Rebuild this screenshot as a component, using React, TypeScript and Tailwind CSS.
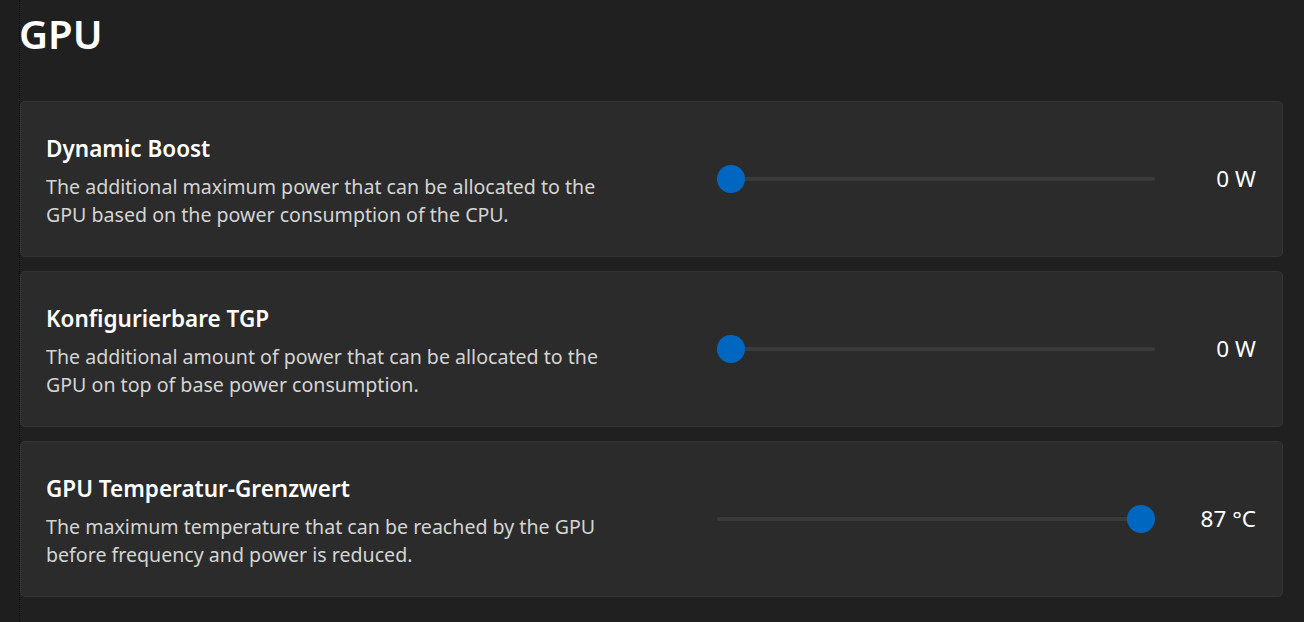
import React from "react";

interface SettingCardProps {
  title: string;
  lines: string[];
  percent: number;
  value: string;
}

const SettingCard = ({ title, lines, percent, value }: SettingCardProps) => {
  return (
    <div className="h-[156px] w-full rounded-[5px] border border-[#353535] bg-[#2b2b2b] flex items-center pl-[25px] pr-[26px]">
      <div className="flex-1 flex flex-col pt-[6px]">
        <h2 className="text-[22.5px] font-semibold text-white leading-[28px]">{title}</h2>
        <p className="mt-[10px] text-[19.6px] text-[#d4d4d4] leading-[28px]">
          {lines.map((l, i) => (
            <span key={i} className="block whitespace-nowrap">
              {l}
            </span>
          ))}
        </p>
      </div>
      <div className="relative w-[438px] h-[28px] flex items-center -ml-[1px]">
        <div className="w-full h-[4px] rounded-full bg-[#3a3a3a]" />
        <div
          className="absolute top-0 w-[28px] h-[28px] rounded-full bg-[#0067c0]"
          style={{ left: `${(percent / 100) * 410}px` }}
        />
      </div>
      <div className="w-[101px] text-right text-[22.5px] text-white">{value}</div>
    </div>
  );
};

export default function App() {
  return (
    <div
      className="w-[1304px] h-[622px] bg-[#202020] flex overflow-hidden"
      style={{ fontFamily: '"Noto Sans", "Open Sans", sans-serif' }}
    >
      <div className="w-[20px] h-full bg-[#1e1e1e] border-r border-dotted border-[#0a0a0a]" />
      <div className="flex-1 flex flex-col pr-[21px]">
        <h1 className="text-[40px] font-semibold text-white leading-[52px] mt-[8px] -ml-[1px]">GPU</h1>
        <div className="mt-[41px] flex flex-col gap-[14px]">
          <SettingCard
            title="Dynamic Boost"
            lines={[
              "The additional maximum power that can be allocated to the",
              "GPU based on the power consumption of the CPU.",
            ]}
            percent={0}
            value="0 W"
          />
          <SettingCard
            title="Konfigurierbare TGP"
            lines={[
              "The additional amount of power that can be allocated to the",
              "GPU on top of base power consumption.",
            ]}
            percent={0}
            value="0 W"
          />
          <SettingCard
            title="GPU Temperatur-Grenzwert"
            lines={[
              "The maximum temperature that can be reached by the GPU",
              "before frequency and power is reduced.",
            ]}
            percent={100}
            value="87 °C"
          />
        </div>
      </div>
    </div>
  );
}
